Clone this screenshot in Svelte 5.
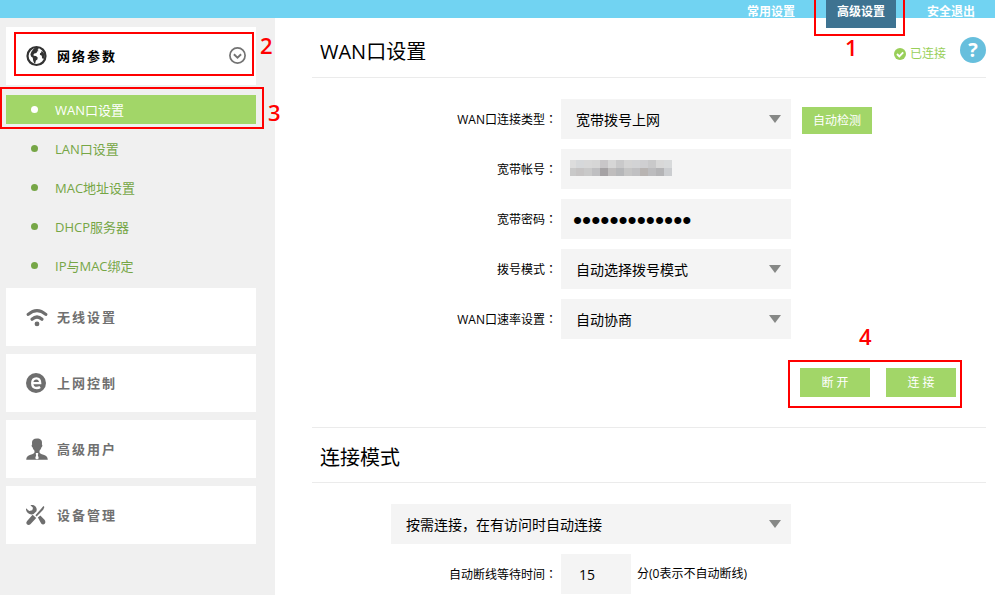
<script>
  const tabs = [
    { text: '常用设置' },
    { text: '高级设置', active: true, mark: 1 },
    { text: '安全退出' }
  ];

  const subItems = ['WAN口设置', 'LAN口设置', 'MAC地址设置', 'DHCP服务器', 'IP与MAC绑定'];

  const groups = [
    { icon: 'wifi', text: '无线设置' },
    { icon: 'web', text: '上网控制' },
    { icon: 'user', text: '高级用户' },
    { icon: 'tools', text: '设备管理' }
  ];

  // grey levels of the masked account, 8px cells
  const mask = [
    ['#dddddd', '#d6d8da', '#d8d8d8', '#d6d6d6', '#c8c6c8', '#d6d6d6', '#c9c9ca', '#d4d4d4', '#d2d3d5', '#cfcfd1', '#c9c9ca', '#d8d8d8', '#d8dadb'],
    ['#c9c9c9', '#c6c4c4', '#c9c9c9', '#bfbfc1', '#a5a2a4', '#bfbdbd', '#b6b7b9', '#c5c5c5', '#c0c0c2', '#b8b4b2', '#bcbcbe', '#b4b4b6', '#cbcdd0']
  ];

  let current = $state('WAN口设置');
  let password = $state('1234567890123');
  let idle = $state('15');
</script>

{#snippet label(id, text)}
  <label for={id}>{text}<span class="colon">：</span></label>
{/snippet}

{#snippet picker(id, text, name = undefined)}
  <div class="select">
    <select {id} aria-label={name}>
      <option>{text}</option>
    </select>
  </div>
{/snippet}

<div class="page">
  <header>
    <nav class="tabs">
      {#each tabs as tab}
        <a href="#top" class:active={tab.active}>
          {tab.text}
          {#if tab.mark}
            <span class="mark mark-tab"><b>{tab.mark}</b></span>
          {/if}
        </a>
      {/each}
    </nav>
  </header>

  <div class="body">
    <aside>
      <button class="group open" type="button">
        <svg class="icon" viewBox="0 0 22 22" aria-hidden="true">
          <circle cx="10.500" cy="11" r="9" fill="none" stroke="#333" stroke-width="2.200" />
          <path fill="#333" d="M8 3.200l3.600-.4 1.200 1-1.400 1.100 1.200 1-1.500.7-.6 1.500-2.200.4-.9 1.300.3 1 2.300.2 1.700 1.500-.3 1.900-1.500 1.200-.6 2.400-1.100.3-1.100-3.100-.3-2.400-1.700-1.300-.7-2.200 1-2.600zM15 6.200l2 .5 1.700 3-.2 2.600-1.300 1.900-1.200-1.500-.2-2-1.900-.9.1-1.600 1.300-.6z" />
        </svg>
        <span class="name">网络参数</span>
        <svg class="fold" viewBox="0 0 18 18" aria-hidden="true">
          <circle cx="9.500" cy="8.500" r="7.600" fill="none" stroke="#737373" stroke-width="1.700" />
          <path d="M5.900 7.200l3.600 3.500 3.600-3.500" fill="none" stroke="#737373" stroke-width="1.900" />
        </svg>
        <span class="mark mark-group"><b>2</b></span>
      </button>

      <ul>
        {#each subItems as item}
          <li>
            <a href="#top" class:active={current === item} onclick={() => (current = item)}>{item}
              {#if item === 'WAN口设置'}
                <span class="mark mark-item"><b>3</b></span>
              {/if}
            </a>
          </li>
        {/each}
      </ul>

      {#each groups as group}
        <button class="group" type="button">
          <svg class="icon" viewBox="0 0 22 22" fill="#6e6e6e" aria-hidden="true">
            {#if group.icon === 'wifi'}
              <path d="M2.200 8.400Q11 .8 19.800 8.400" fill="none" stroke="#6e6e6e" stroke-width="3.200" stroke-linecap="round" />
              <path d="M6 13.200Q11 8.800 16 13.200" fill="none" stroke="#6e6e6e" stroke-width="3.200" stroke-linecap="round" />
              <circle cx="11" cy="17.900" r="2.400" />
            {:else if group.icon === 'web'}
              <circle cx="10" cy="11" r="10" />
              <path d="M6.600 11.200h7.600c0-3-1.400-4.900-3.800-4.900-2.500 0-4.200 2-4.200 4.900 0 3 1.700 4.800 4.600 4.800 1.400 0 2.500-.4 3.300-1" fill="none" stroke="#fff" stroke-width="2.300" />
            {:else if group.icon === 'user'}
              <path d="M11 .6c3.600 0 5.100 1.600 5 4.200l-.1 1.800c.8.4.5 2.400-.4 2.700-.4 1.600-1.200 2.700-2 3.400v1.800c.8 1.500 3.400 1.900 5.800 3 1.500.7 2.300 2 2.500 4.300H.2c.2-2.300 1-3.600 2.500-4.300 2.400-1.100 5-1.500 5.800-3v-1.800c-.8-.7-1.600-1.800-2-3.400-.9-.3-1.200-2.300-.4-2.700L6 4.800C5.900 2.200 7.400.6 11 .6z" />
              <path fill="#fff" d="M10 15h2l.3 1-.5 1 1 3.200-1.800 1.300-1.800-1.300 1-3.200-.5-1z" />
            {:else}
              <path d="M4.400 1.200c3.100-1 6.500 1 6.300 4.600l-.2 1.400-2.900 2.900-1.700.3C2.300 10.600-.5 7.700 0 4.200L3.200 7l3.100-.7.700-2.500z" />
              <path d="M6.600 10.800l3.600 3.300-5.800 6.200c-1 1-2.700.9-3.500 0s-.8-2.400.2-3.400zM17.400 2l1 1.100-1.200 2.600-6.600 6.700-1.200-1.200 6.200-7zM11.900 13.400l2.400-2 4.200 4.400c1 1.200 1.200 3 .2 4s-2.700.7-3.500-.3z" />
            {/if}
          </svg>
          <span class="name">{group.text}</span>
        </button>
      {/each}
    </aside>

    <main id="top">
      <section>
        <div class="head">
          <h2>WAN口设置</h2>
          <span class="status">
            <svg viewBox="0 0 12 12" aria-hidden="true">
              <circle cx="6" cy="6" r="6" fill="#99cf59" />
              <path d="M3 6l2.300 2.300 3.900-4" fill="none" stroke="#fff" stroke-width="1.900" />
            </svg>
            已连接
          </span>
          <button class="help" type="button">?</button>
        </div>

        <form>
          <div class="row">
            {@render label('type', 'WAN口连接类型')}
            {@render picker('type', '宽带拨号上网')}
            <button class="btn detect" type="button">自动检测</button>
          </div>
          <div class="row">
            {@render label('account', '宽带帐号')}
            <div class="account">
              <input id="account" type="text" />
              <svg viewBox="0 0 102 16" aria-hidden="true" shape-rendering="crispEdges">
                {#each mask as cells, y}
                  {#each cells as fill, x}
                    <rect x={x ? x * 8 - 2 : 0} y={y * 8} width={x ? 8 : 6} height="8" {fill} />
                  {/each}
                {/each}
              </svg>
            </div>
          </div>
          <div class="row">
            {@render label('password', '宽带密码')}
            <input id="password" type="password" bind:value={password} />
          </div>
          <div class="row">
            {@render label('dial', '拨号模式')}
            {@render picker('dial', '自动选择拨号模式')}
          </div>
          <div class="row">
            {@render label('speed', 'WAN口速率设置')}
            {@render picker('speed', '自动协商')}
          </div>
        </form>

        <div class="actions">
          <div class="pair">
            <button class="btn" type="button">断 开</button>
            <button class="btn" type="button">连 接</button>
            <span class="mark mark-pair"><b>4</b></span>
          </div>
        </div>
      </section>

      <section class="mode">
        <div class="head">
          <h2>连接模式</h2>
        </div>
        <form>
          <div class="wide">
            {@render picker('mode', '按需连接，在有访问时自动连接', '连接模式')}
          </div>
          <div class="row">
            {@render label('idle', '自动断线等待时间')}
            <div class="idle">
              <input id="idle" type="text" bind:value={idle} />
              <span>分(0表示不自动断线)</span>
            </div>
          </div>
        </form>
      </section>
    </main>
  </div>
</div>

<style>
  :global(body) {
    background: #fff;
  }

  .page {
    display: flex;
    flex-direction: column;
    min-height: 100vh;
    color: #000;
    font-family: "Open Sans", "Noto Sans CJK SC", sans-serif;
    font-size: 12px;
    line-height: 20px;
  }

  button, input, select {
    box-sizing: border-box;
    margin: 0;
    border: 0;
    border-radius: 0;
    color: inherit;
    font: inherit;
  }

  a { text-decoration: none; }

  header {
    height: 18px;
    background: #71d3f2;
  }

  .tabs {
    display: flex;
    justify-content: flex-end;
    gap: 20px;
    padding-right: 9px;
  }

  .tabs a {
    position: relative;
    width: 70px;
    height: 28px;
    color: #fff;
    font-weight: bold;
    line-height: 24px;
    text-align: center;
  }

  .tabs a.active { background: #3e7391; }

  .body {
    display: flex;
    flex: 1;
  }

  aside {
    box-sizing: border-box;
    flex: none;
    width: 275px;
    padding: 9px 19px 0 6px;
    background: #f0f0f0;
  }

  .group {
    position: relative;
    display: flex;
    align-items: center;
    gap: 9px;
    width: 100%;
    height: 58px;
    margin-bottom: 8px;
    padding: 0 10px 0 20px;
    background: #fff;
    color: #707070;
    font-size: 13px;
    font-weight: bold;
    letter-spacing: 2px;
    text-align: left;
  }

  .group.open {
    margin-bottom: 10px;
    color: #000;
  }

  .icon {
    width: 22px;
    height: 22px;
  }

  .name { flex: 1; }

  .fold {
    width: 18px;
    height: 18px;
  }

  ul {
    display: grid;
    gap: 10px;
    margin: 0 0 8px;
    padding: 0;
    list-style: none;
  }

  li a {
    position: relative;
    display: flex;
    align-items: center;
    height: 29px;
    color: #76a646;
    font-size: 13px;
  }

  li a::before {
    content: '';
    width: 7px;
    height: 7px;
    margin: 0 17px 0 25px;
    border-radius: 50%;
    background: currentColor;
  }

  li a.active {
    background: #a2d668;
    color: #fff;
  }

  main {
    flex: 1;
    min-width: 0;
    padding: 0 9px 0 37px;
  }

  .head {
    display: flex;
    align-items: center;
    height: 54px;
    padding: 5px 0 0 8px;
    border-bottom: 1px solid #ebebeb;
  }

  h2 {
    flex: 1;
    margin: 0;
    padding-top: 4px;
    font-size: 20px;
    font-weight: normal;
    line-height: 28px;
  }

  .status {
    display: flex;
    align-items: center;
    gap: 4px;
    margin-right: 14px;
    padding-top: 8px;
    color: #99cf59;
  }

  .status svg {
    width: 12px;
    height: 12px;
  }

  .help {
    width: 26px;
    height: 26px;
    padding: 0;
    border-radius: 50%;
    background: #67bfdd;
    color: #fff;
    font-size: 20px;
    font-weight: bold;
    line-height: 26px;
  }

  form {
    display: grid;
    gap: 10px;
    padding-top: 21px;
  }

  .row {
    display: grid;
    grid-template-columns: 249px 230px auto;
    align-items: center;
    justify-content: start;
  }

  label {
    padding-right: 4px;
    text-align: right;
  }

  .colon { font-family: "Noto Sans CJK JP", sans-serif; }

  input, select {
    width: 100%;
    height: 40px;
    padding: 0 15px;
    background: #f4f4f4;
    font-size: 14px;
  }

  select {
    padding-top: 2px;
    appearance: none;
  }

  #password {
    padding: 2px 12px 0;
    font-family: "Liberation Sans", sans-serif;
    font-size: 26px;
  }

  .select, .account { position: relative; }

  .select::after {
    content: '';
    position: absolute;
    top: 16px;
    right: 10px;
    border: 6px solid transparent;
    border-top: 8px solid #868886;
    border-bottom: 0;
    pointer-events: none;
  }

  .account svg {
    position: absolute;
    top: 11px;
    left: 9px;
    width: 102px;
    height: 16px;
  }

  .btn {
    width: 70px;
    height: 29px;
    padding: 0;
    background: #a2d668;
    color: #fff;
  }

  .detect {
    height: 27px;
    margin: 2px 0 0 11px;
    padding-top: 2px;
  }

  .actions {
    display: flex;
    justify-content: flex-end;
    padding: 29px 30px 30px 0;
  }

  .pair {
    position: relative;
    display: flex;
    gap: 16px;
  }

  .mode { border-top: 1px solid #ebebeb; }

  .mode .head {
    height: 52px;
    padding-top: 2px;
  }

  .wide {
    width: 400px;
    margin-left: 79px;
  }

  .idle {
    display: flex;
    align-items: center;
    gap: 6px;
  }

  .idle input {
    width: 70px;
    padding: 0 18px;
  }

  /* numbered step frames */
  .mark {
    position: absolute;
    border: 2px solid #f00;
    color: #f00;
    pointer-events: none;
  }

  .mark b {
    position: absolute;
    font-size: 22px;
    font-weight: 600;
    letter-spacing: normal;
    line-height: 24px;
  }

  .mark-tab { inset: -2px -9px -8px -12px; }
  .mark-tab b { top: 35px; left: 29px; }
  .mark-group { inset: 5px 2px 9px 8px; }
  .mark-group b { top: -1px; left: 244px; }
  .mark-item { inset: -8px -8px -5px -6px; }
  .mark-item b { top: 11px; left: 266px; }
  .mark-pair { inset: -8px -6px -11px -12px; }
  .mark-pair b { top: -38px; left: 69px; }
</style>
